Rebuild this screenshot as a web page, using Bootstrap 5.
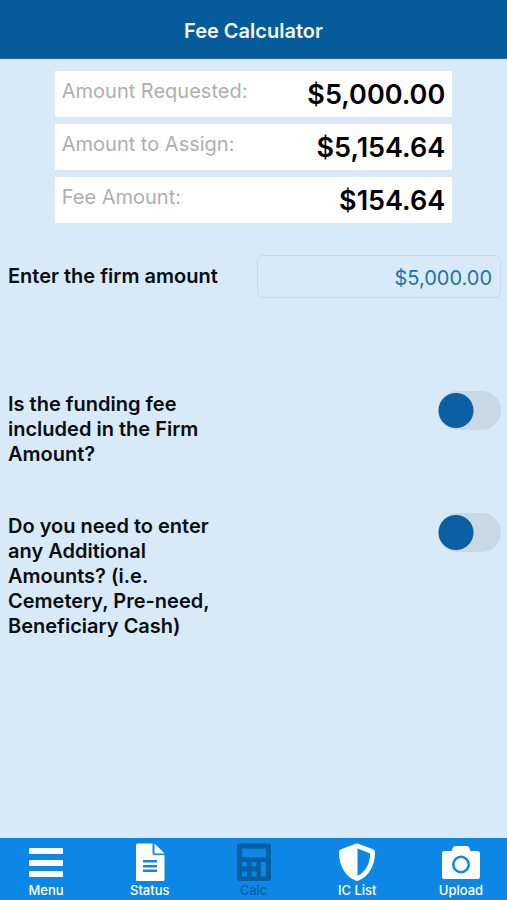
<!DOCTYPE html>
<html lang="en">
<head>
<meta charset="utf-8">
<meta name="viewport" content="width=device-width, initial-scale=1">
<title>Fee Calculator</title>
<link href="https://cdn.jsdelivr.net/npm/bootstrap@5.3.0/dist/css/bootstrap.min.css" rel="stylesheet">
<style>
  body { background: #d8eaf7; color: #080d12; font-family: Inter, "Liberation Sans", sans-serif; }
  .app-header { background: #065b9b; height: 59px; border-bottom: 1px solid #2b6c9f; padding-top: 5px; }
  .app-title { font-size: 20px; line-height: 25px; font-weight: 600; color: #f2f9ff; }
  .totals { width: 78.4%; gap: 7px; margin: 12px auto 32px; }
  .total-row { height: 46px; padding: 0 7px; }
  .total-row dt { font-size: 20px; line-height: 40px; font-weight: 400; color: #afafaf; }
  .total-row dd { font-size: 27px; line-height: 48px; font-weight: 600; color: #000; }
  .fields { padding: 0 6px 0 8px; }
  .question { font-size: 20px; line-height: 25px; font-weight: 600; }
  .firm-row { margin-bottom: 93px; }
  .amount-box.form-control { width: 49.5%; height: 43px; padding: 2px 8px 0; font-size: 20px; color: #2272b0; background: transparent; border: 1px solid #c7dae8; border-radius: 6px; }
  .switch-row { margin-bottom: 46px; }
  .switch-row .question { width: 216px; padding-top: 1px; }
  .toggle.form-check-input { width: 63px; height: 39px; margin: 0; border: 0; border-radius: 20px; background-color: #c8d9e5;
    background-image: radial-gradient(circle, #0b5fa3 0 17px, #0b5fa300 18px); background-size: 36px 39px; background-position: left center; }
  .toggle.form-check-input:checked { background-color: #9cc9ec; background-position: right center; }
  .tab-bar { background: #0d87e6; height: 62px; padding: 4px 16px 0; }
  .tab { width: 60px; font-size: 13px; line-height: 17px; font-weight: 500; color: #fff; }
  .tab svg { width: 40px; height: 40px; }
  .tab.current { color: #06609f; }
</style>
<script src="https://cdn.jsdelivr.net/npm/bootstrap@5.3.0/dist/js/bootstrap.bundle.min.js"></script>
</head>
<body class="d-flex flex-column min-vh-100">
<header class="app-header d-flex align-items-center justify-content-center">
  <h1 class="app-title m-0">Fee Calculator</h1>
</header>
<main class="flex-grow-1">
  <dl class="totals d-flex flex-column">
    <div class="total-row bg-white d-flex justify-content-between"><dt>Amount Requested:</dt><dd class="m-0">$5,000.00</dd></div>
    <div class="total-row bg-white d-flex justify-content-between"><dt>Amount to Assign:</dt><dd class="m-0">$5,154.64</dd></div>
    <div class="total-row bg-white d-flex justify-content-between"><dt>Fee Amount:</dt><dd class="m-0">$154.64</dd></div>
  </dl>
  <form class="fields">
    <div class="firm-row d-flex justify-content-between align-items-center">
      <label class="question" for="firm">Enter the firm amount</label>
      <input class="amount-box form-control text-end" id="firm" type="text" inputmode="decimal" value="$5,000.00">
    </div>
    <div class="switch-row d-flex justify-content-between align-items-start">
      <label class="question" for="included">Is the funding fee included in the Firm Amount?</label>
      <input class="toggle form-check-input" id="included" type="checkbox" role="switch">
    </div>
    <div class="switch-row d-flex justify-content-between align-items-start">
      <label class="question" for="additional">Do you need to enter any Additional Amounts? (i.e. Cemetery, Pre-need, Beneficiary Cash)</label>
      <input class="toggle form-check-input" id="additional" type="checkbox" role="switch">
    </div>
  </form>
</main>
<nav class="tab-bar d-flex justify-content-between" aria-label="Main">
  <a class="tab d-flex flex-column align-items-center text-decoration-none" href="#menu">
    <svg viewBox="0 0 40 40" fill="currentColor" aria-hidden="true"><rect x="3" y="6" width="34" height="6" rx="1"/><rect x="3" y="18" width="34" height="6" rx="1"/><rect x="3" y="29" width="34" height="6" rx="1"/></svg>
    Menu
  </a>
  <a class="tab d-flex flex-column align-items-center text-decoration-none" href="#status">
    <svg viewBox="0 0 40 40" fill="currentColor" aria-hidden="true"><path fill-rule="evenodd" d="M7.500 1.500H22.500V11a2 2 0 0 0 2 2H34.500V37.500a1.500 1.500 0 0 1-1.500 1.500H7.500A1.500 1.500 0 0 1 6 37.500V3a1.500 1.500 0 0 1 1.500-1.500ZM13 18v2.500H27V18ZM13 23v2.500H27V23ZM13 27.500V30H27V27.500Z"/><path d="M24.500 1.500 34.500 11.500H24.500Z"/></svg>
    Status
  </a>
  <a class="tab current d-flex flex-column align-items-center text-decoration-none" href="#calc" aria-current="page">
    <svg viewBox="0 0 40 40" fill="currentColor" aria-hidden="true"><path fill-rule="evenodd" d="M6 1.500H34a3 3 0 0 1 3 3V36a3 3 0 0 1-3 3H6a3 3 0 0 1-3-3V4.500a3 3 0 0 1 3-3ZM8 6.500V15.500H32V6.500ZM8 20V24.500H13V20ZM17.500 20V24.500H22.500V20ZM27 20V34.500H32V20ZM8 29.500V34.500H13V29.500ZM17.500 29.500V34.500H22.500V29.500Z"/></svg>
    Calc
  </a>
  <a class="tab d-flex flex-column align-items-center text-decoration-none" href="#ic-list">
    <svg viewBox="0 0 40 40" fill="currentColor" aria-hidden="true"><path fill-rule="evenodd" d="M18.700 1.800a3.500 3.500 0 0 1 2.600 0L36 7.300a3 3 0 0 1 2 2.900C38 24 31.500 34.500 21.500 38.600a4 4 0 0 1-3 0C8.500 34.500 2 24 2 10.200a3 3 0 0 1 2-2.900ZM20.500 6.500V33.800C28.500 30 32.800 22.500 33.200 11.500Z"/></svg>
    IC List
  </a>
  <a class="tab d-flex flex-column align-items-center text-decoration-none" href="#upload">
    <svg viewBox="0 0 40 40" fill="currentColor" aria-hidden="true"><path fill-rule="evenodd" d="M14.500 4H26a2.500 2.500 0 0 1 2.300 1.500L29.500 9H36.500a2.500 2.500 0 0 1 2.500 2.500V34.500a2.500 2.500 0 0 1-2.500 2.500H3.500A2.500 2.500 0 0 1 1 34.500V11.500A2.500 2.500 0 0 1 3.500 9H10.500L12 5.500A2.500 2.500 0 0 1 14.500 4ZM20 13.500a9 9 0 1 0 0 18a9 9 0 1 0 0-18ZM20 16a6.500 6.500 0 1 1 0 13a6.500 6.500 0 1 1 0-13Z"/></svg>
    Upload
  </a>
</nav>
</body>
</html>
